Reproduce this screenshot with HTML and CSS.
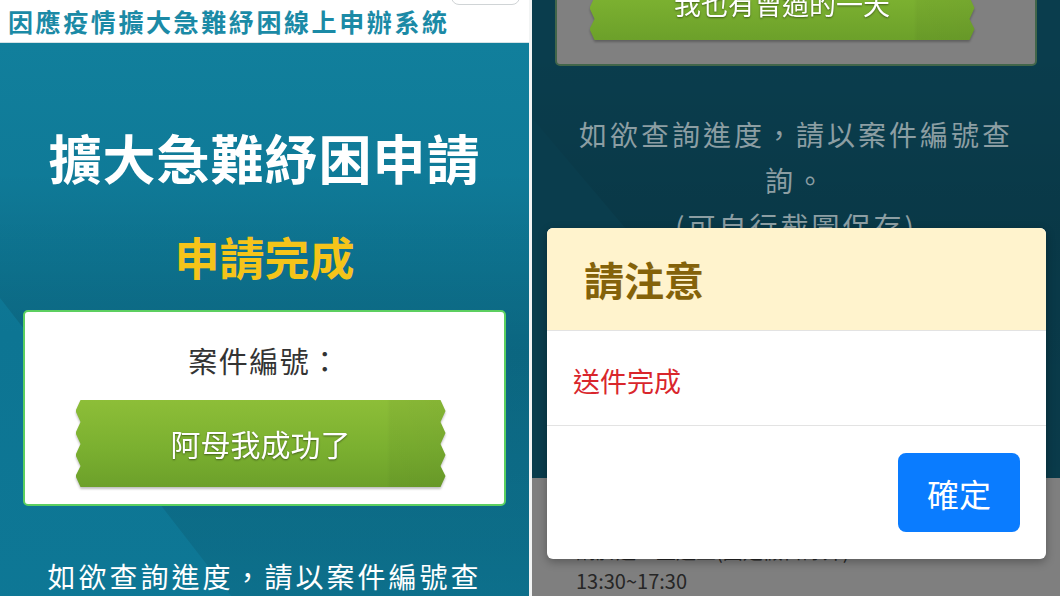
FILE: index.html
```html
<!DOCTYPE html>
<html lang="zh-Hant">
<head>
    <meta charset="utf-8">
    <title>擴大急難紓困申請</title>
    <link rel="stylesheet" href="styles.css">
</head>
<body>
    <div class="screens">
        <!-- 申請完成頁 -->
        <section class="screen">
            <header class="site-header">
                <h1 class="site-title">因應疫情擴大急難紓困線上申辦系統</h1>
                <button class="menu-btn" type="button"></button>
            </header>
            <main class="page">
                <h2 class="page-title">擴大急難紓困申請</h2>
                <p class="page-status">申請完成</p>
                <div class="case-card">
                    <p class="case-label">案件編號：</p>
                    <div class="ribbon-wrap">
                        <div class="ribbon">阿母我成功了</div>
                    </div>
                </div>
                <p class="page-note">如欲查詢進度，請以案件編號查詢。<br>(可自行截圖保存)</p>
            </main>
        </section>

        <!-- 送件完成後跳出的提示視窗 -->
        <section class="screen screen-dimmed">
            <main class="page page-scrolled">
                <div class="case-card">
                    <p class="case-label">案件編號：</p>
                    <div class="ribbon-wrap">
                        <div class="ribbon">我也有曾過的一天</div>
                    </div>
                </div>
                <p class="page-note">如欲查詢進度，請以案件編號查詢。<br>(可自行截圖保存)</p>
            </main>
            <footer class="page-footer">
                <p>請於週一至週五(國定假日除外) 09:00~12:00<br>13:30~17:30</p>
            </footer>

            <div class="modal">
                <div class="modal-header">
                    <h3 class="modal-title">請注意</h3>
                </div>
                <div class="modal-body">
                    <p class="modal-msg">送件完成</p>
                </div>
                <div class="modal-footer">
                    <button class="btn-ok" type="button">確定</button>
                </div>
            </div>
        </section>
    </div>
</body>
</html>
```

FILE: styles.css
```css
body {
    margin: 0;
    overflow: hidden;
    font-family: "Noto Sans CJK TC", "Noto Sans", sans-serif;
}

p, h1, h2, h3 {
    margin: 0;
}

.screens {
    display: flex;
    gap: 3px;
    width: 1060px;
    height: 596px;
    background-color: #f2f4f4; /* thin light line between the two phones */
}

.screen {
    position: relative;
    display: flex;
    flex-direction: column;
    width: 529px;
    height: 596px;
    overflow: hidden;
}

.screen-dimmed {
    width: 528px;
}

/* top bar */
.site-header {
    display: flex;
    justify-content: space-between;
    align-items: flex-start;
    height: 44px;
    padding: 0 9px 0 8px;
    background-color: #fff;
    border-bottom: 1px solid #d5e2e6;
}

.site-title {
    font-size: 25px;
    font-weight: 700;
    line-height: 42px;
    letter-spacing: 2.6px;
    color: #1b8aa6;
    white-space: nowrap;
}

.menu-btn {
    width: 69px;
    height: 36px;
    margin-top: -31px;
    background-color: #fff;
    border: 1px solid #d0d4d6;
    border-radius: 8px;
}

/* teal page body */
.page {
    position: relative;
    flex: 1;
    text-align: center;
    background: linear-gradient(to bottom, #117f9c, #0d7593 45%, #0e7896);
}

/* big dark diagonal panel behind the card */
.page::before {
    content: "";
    position: absolute;
    inset: 0;
    background: linear-gradient(to bottom, rgba(0,0,0,0) 20%, rgba(0,0,0,.13) 48%, rgba(0,0,0,.08) 80%, rgba(0,0,0,.03));
    clip-path: polygon(0 0, 100% 0, 100% 100%, 305px 100%, 0 255px);
}

.page > * {
    position: relative;
}

.page-title {
    margin-top: 82px;
    font-size: 53px;
    font-weight: 700;
    line-height: 64px;
    letter-spacing: 1px;
    color: #fff;
}

.page-status {
    margin-top: 40px;
    font-size: 45px;
    font-weight: 700;
    line-height: 56px;
    color: #f5c41a;
}

.case-card {
    margin: 25px 23px 0;
    padding: 28px 0 17px;
    background-color: #fff;
    border: 2px solid #5ccf60;
    border-radius: 5px;
}

.case-label {
    font-size: 29px;
    line-height: 40px;
    letter-spacing: 1.5px;
    color: #333;
}

/* green tape with notched ends */
.ribbon-wrap {
    width: 370px;
    margin: 20px auto 0;
    position: relative;
    left: -4px;
    filter: drop-shadow(0 2px 1px rgba(0,0,0,.25));
}

.ribbon {
    height: 87px;
    font-size: 30px;
    line-height: 87px;
    color: #fff;
    text-shadow: 0 1px 2px rgba(0,0,0,.45);
    background:
        linear-gradient(to right, rgba(0,0,0,0) 84%, rgba(0,0,0,.035) 85%, rgba(0,0,0,.05) 100%),
        linear-gradient(to bottom, #8dbe38, #7bb030 55%, #6ca02a);
    clip-path: polygon(5px 0, calc(100% - 5px) 0, 100% 11px, calc(100% - 5px) 22px, 100% 33px, calc(100% - 5px) 44px, 100% 55px, calc(100% - 5px) 66px, 100% 76px, calc(100% - 5px) 87px, 5px 87px, 0 76px, 5px 66px, 0 55px, 5px 44px, 0 33px, 5px 22px, 0 11px);
}

.page-note {
    max-width: 450px;
    margin: 47px auto 0;
    font-size: 28px;
    line-height: 46px;
    letter-spacing: 3px;
    color: #fff;
}

/* right phone: page under the modal backdrop */
.screen-dimmed .page {
    background: #0a3d4d;
}

.screen-dimmed .page::before {
    background: linear-gradient(to bottom, rgba(0,0,0,0) 30%, rgba(0,0,0,.08) 60%, rgba(0,0,0,.04));
}

.page-scrolled {
    margin-top: -137px;
}

.screen-dimmed .case-card {
    margin-top: 0;
    padding-bottom: 24px;
    background-color: #808080;
    border-color: #42664a;
}

.screen-dimmed .case-label {
    color: #1a1a1a;
}

.screen-dimmed .ribbon-wrap {
    width: 385px;
    left: -14px;
}

.screen-dimmed .ribbon {
    height: 73px;
    padding-top: 14px;
    font-size: 27px;
    line-height: 73px;
}

.screen-dimmed .page-note {
    margin-top: 45px;
    color: #8c9ea3;
}

.page-footer {
    height: 118px;
    padding: 58px 0 0 44px;
    box-sizing: border-box;
    background-color: #7f7f7f;
    font-size: 20px;
    line-height: 30px;
    color: #262626;
}

/* alert dialog */
.modal {
    position: absolute;
    top: 228px;
    left: 15px;
    width: 499px;
    background-color: #fff;
    border-radius: 6px;
    box-shadow: 0 3px 10px rgba(0,0,0,.3);
    overflow: hidden;
}

.modal-header {
    padding: 25px 37px;
    background-color: #fff3cd;
    border-bottom: 1px solid #e3e3e3;
}

.modal-title {
    font-size: 40px;
    font-weight: 700;
    line-height: 52px;
    color: #84620a;
}

.modal-body {
    padding: 31px 26px 25px;
    border-bottom: 1px solid #e3e3e3;
}

.modal-msg {
    font-size: 27px;
    line-height: 38px;
    color: #d9262c;
}

.modal-footer {
    display: flex;
    justify-content: flex-end;
    padding: 27px 26px;
}

.btn-ok {
    width: 122px;
    height: 79px;
    font-family: inherit;
    font-size: 32px;
    color: #fff;
    background-color: #0a7cff;
    border: none;
    border-radius: 8px;
}
```
